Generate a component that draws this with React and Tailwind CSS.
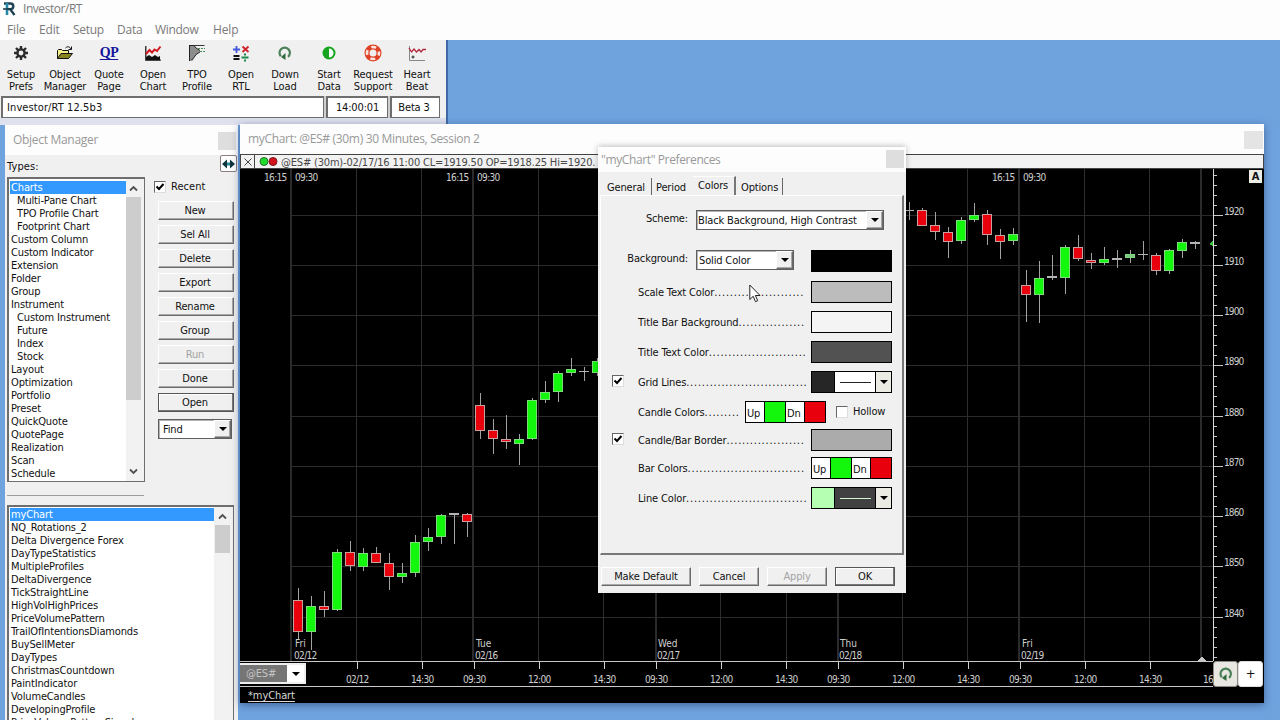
import clsx from 'clsx';

const tools = [
    { id: 'prefs', lines: ['Setup', 'Prefs'] },
    { id: 'folder', lines: ['Object', 'Manager'] },
    { id: 'quote', lines: ['Quote', 'Page'] },
    { id: 'chart', lines: ['Open', 'Chart'] },
    { id: 'tpo', lines: ['TPO', 'Profile'] },
    { id: 'rtl', lines: ['Open', 'RTL'] },
    { id: 'download', lines: ['Down', 'Load'] },
    { id: 'start', lines: ['Start', 'Data'] },
    { id: 'support', lines: ['Request', 'Support'] },
    { id: 'heart', lines: ['Heart', 'Beat'] },
];

const types = [
    'Charts', '>Multi-Pane Chart', '>TPO Profile Chart', '>Footprint Chart', 'Custom Column',
    'Custom Indicator', 'Extension', 'Folder', 'Group', 'Instrument', '>Custom Instrument',
    '>Future', '>Index', '>Stock', 'Layout', 'Optimization', 'Portfolio', 'Preset',
    'QuickQuote', 'QuotePage', 'Realization', 'Scan', 'Schedule',
];

const objects = [
    'myChart', 'NQ_Rotations_2', 'Delta Divergence Forex', 'DayTypeStatistics', 'MultipleProfiles',
    'DeltaDivergence', 'TickStraightLine', 'HighVolHighPrices', 'PriceVolumePattern',
    'TrailOfIntentionsDiamonds', 'BuySellMeter', 'DayTypes', 'ChristmasCountdown',
    'PaintIndicator', 'VolumeCandles', 'DevelopingProfile', 'PriceVolumePatternSignal',
];

// [x, high, top, bottom, low, kind]
const candles = [
    [298, 588, 600, 632, 639, 'dn'], [311, 596, 606, 632, 650, 'up'], [324, 591, 606, 610, 617, 'dn'],
    [337, 549, 552, 610, 611, 'up'], [350, 541, 552, 566, 571, 'dn'], [363, 548, 553, 567, 571, 'up'],
    [376, 547, 553, 563, 563, 'dn'], [389, 553, 563, 577, 590, 'dn'], [402, 563, 573, 577, 583, 'up'],
    [415, 535, 542, 573, 577, 'up'], [428, 528, 537, 542, 551, 'up'], [441, 514, 515, 537, 544, 'up'],
    [454, 513, 513, 515, 544, 'flat'], [467, 513, 514, 522, 537, 'dn'],
    [480, 393, 405, 431, 439, 'dn'], [493, 419, 430, 439, 454, 'dn'], [506, 415, 439, 442, 449, 'dn'],
    [519, 434, 439, 444, 465, 'up'], [532, 398, 400, 439, 440, 'up'], [545, 381, 392, 400, 403, 'up'],
    [558, 371, 373, 392, 402, 'up'], [571, 358, 369, 373, 376, 'up'], [584, 367, 371, 372, 381, 'flat'],
    [597, 358, 361, 373, 376, 'up'],
    [909, 202, 210, 211, 220, 'flat'], [922, 208, 210, 226, 226, 'dn'], [935, 212, 225, 232, 240, 'dn'],
    [948, 227, 232, 242, 258, 'dn'], [961, 217, 220, 241, 244, 'up'], [974, 203, 215, 220, 222, 'up'],
    [987, 210, 214, 235, 245, 'dn'], [1000, 229, 235, 242, 259, 'dn'], [1013, 228, 234, 241, 245, 'up'],
    [1026, 270, 285, 295, 322, 'dn'], [1039, 261, 278, 295, 323, 'up'], [1052, 255, 276, 278, 280, 'flat'],
    [1065, 245, 247, 278, 294, 'up'], [1078, 235, 247, 259, 261, 'dn'], [1091, 253, 260, 263, 269, 'dn'],
    [1104, 247, 259, 263, 265, 'up'], [1117, 250, 258, 260, 268, 'flat'], [1130, 250, 254, 258, 263, 'dim'],
    [1143, 241, 254, 255, 260, 'flat'], [1156, 253, 255, 271, 275, 'dn'], [1169, 249, 250, 271, 274, 'up'],
    [1182, 239, 242, 251, 258, 'up'], [1195, 241, 242, 244, 249, 'flat'],
];

const fills = { up: '#12f70c', dn: '#e8000c', dim: '#7fc787', flat: '#b4b4b4' };

const sessionLines = [290, 472, 655, 837, 1018, 1200];
const thinLines = [356, 421, 538, 603, 720, 786, 902, 967, 1084, 1149];
const prices = [1920, 1910, 1900, 1890, 1880, 1870, 1860, 1850, 1840];
const topTimes = [[264, '16:15'], [295, '09:30'], [446, '16:15'], [477, '09:30'], [992, '16:15'], [1023, '09:30']];
const days = [[295, 'Fri', '02/12'], [476, 'Tue', '02/16'], [658, 'Wed', '02/17'], [840, 'Thu', '02/18'], [1022, 'Fri', '02/19']];
const times = [
    [357, '02/12'], [422, '14:30'], [474, '09:30'], [539, '12:00'], [604, '14:30'], [656, '09:30'], [721, '12:00'],
    [786, '14:30'], [838, '09:30'], [903, '12:00'], [968, '14:30'], [1020, '09:30'], [1085, '12:00'], [1150, '14:30'],
];

const raised = 'border border-t-white border-l-white border-r-[#6b6b6b] border-b-[#6b6b6b] shadow-[inset_-1px_-1px_0_#a8a8a8]';
const sunken = 'border-t-2 border-l-2 border-r border-b border-[#6e6e6e]';
const field = 'border border-[#5f5f5f] shadow-[inset_1px_1px_0_#b4b4b4]';

function ToolIcon({ id }) {
    if (id === 'quote') {
        return <span className="mt-[2px] font-['Liberation_Serif',serif] text-[14px] leading-[16px] font-bold tracking-[-0.5px] text-[#16149c] underline underline-offset-2">QP</span>;
    }
    return (
        <svg width="20" height="20" viewBox="0 0 20 20" fill="none">
            {id === 'prefs' && (
                <>
                    <g stroke="#2b2b2b" strokeWidth="2.4">
                        <path d="M10 3v14M3 10h14M5 5l10 10M15 5L5 15" />
                    </g>
                    <circle cx="10" cy="10" r="4.8" fill="#2b2b2b" />
                    <circle cx="10" cy="10" r="2.4" fill="#f0f0f0" />
                </>
            )}
            {id === 'folder' && (
                <>
                    <path d="M2.500 15.500V7.500l1-1h3l1 1h6v3" fill="#f7f08a" stroke="#111" />
                    <path d="M2.500 15.500l3.500-5h11.500l-4 5z" fill="#8a8420" stroke="#111" />
                    <path d="M10.500 5c2-2 4-1.500 5.500 1M16.500 3.500v3h-3" stroke="#111" />
                </>
            )}
            {id === 'chart' && (
                <>
                    <path d="M3 17V14l3-2 3 2 3-2 3 2 2-1v4z" fill="#111" />
                    <path d="M2.800 3v14.200h15" stroke="#111" strokeWidth="1.200" />
                    <path d="M3 11l3.500-4L9 9.500l2.500-3L14 8l3.500-4.500" stroke="#d11a22" strokeWidth="2" />
                </>
            )}
            {id === 'tpo' && (
                <>
                    <path d="M3 2.500h4l2 3 4 2v1l-4 3-2 3-1 3H3z" fill="#8d8d8d" />
                    <path d="M2.500 2v16M3 2.500h4l2 2.500 4 2.500M13 9l-4 2.500-2 3-3 3" stroke="#222" />
                    <path d="M7 2.500h10.500" stroke="#333" />
                    <path d="M11 5.500h7M13 8.500h5" stroke="#4b8b57" strokeDasharray="2 1" />
                </>
            )}
            {id === 'rtl' && (
                <>
                    <path d="M2 6.500h7M5.500 3v7" stroke="#4256d8" strokeWidth="1.800" />
                    <path d="M11.500 3.500l6 5.500M17.500 3.500l-6 5.500" stroke="#d0212c" strokeWidth="1.800" />
                    <path d="M2.500 13h6M2.500 16h6" stroke="#111" strokeWidth="1.800" />
                    <path d="M10.500 14.500h7M13 11.500h2M13 17.500h2" stroke="#1a8a4a" strokeWidth="1.800" />
                </>
            )}
            {id === 'download' && <ReloadMark />}
            {id === 'start' && (
                <>
                    <circle cx="10" cy="10" r="5.500" stroke="#17a51f" strokeWidth="2" fill="#f5fff5" />
                    <path d="M10 4a6 6 0 0 0 0 12z" fill="#17a51f" />
                </>
            )}
            {id === 'support' && (
                <>
                    <circle cx="10" cy="10" r="6" stroke="#df4126" strokeWidth="5" />
                    <circle cx="10" cy="10" r="6" stroke="#fbe6df" strokeWidth="2.600" strokeDasharray="5 4.425" strokeDashoffset="2.500" />
                </>
            )}
            {id === 'heart' && (
                <>
                    <path d="M2.500 3v14.500H18" stroke="#888" />
                    <path d="M2 5l2.500 4L7 6l2.500 3L12 6.500l2 2.500 2-2.500h3" stroke="#b3283c" strokeWidth="1.300" />
                    <path d="M4.500 14h3M6 12.500v3" stroke="#222" />
                </>
            )}
        </svg>
    );
}

function ReloadMark() {
    return (
        <>
            <path d="M5.800 13.200A5.200 5.200 0 1 1 13 13.800" stroke="#4b8158" strokeWidth="2.200" fill="none" />
            <path d="M10.500 10v7L6 14z" fill="#2f6b3d" />
        </>
    );
}

function Chevron({ up }) {
    return (
        <svg width="9" height="7" viewBox="0 0 9 7" fill="none" className="mx-auto">
            <path d={up ? 'M1 5.500l3.500-3.500L8 5.500' : 'M1 1.500L4.500 5 8 1.500'} stroke="#505050" strokeWidth="1.800" />
        </svg>
    );
}

function DropArrow({ className }) {
    return (
        <span className={clsx('flex items-center justify-center', className)}>
            <svg width="8" height="4" viewBox="0 0 8 4"><path d="M0 0h8L4 4z" fill="#000" /></svg>
        </span>
    );
}

function CheckBox({ checked, className }) {
    return (
        <span className={clsx('block h-[12px] w-[12px] shrink-0 border border-t-[#666] border-l-[#666] border-r-[#ddd] border-b-[#ddd] bg-white', className)}>
            {checked && (
                <svg width="10" height="10" viewBox="0 0 10 10" fill="none">
                    <path d="M1.500 4.500L4 7l4.500-5" stroke="#000" strokeWidth="2" />
                </svg>
            )}
        </span>
    );
}

function PushButton({ label, primary, disabled, className }) {
    return (
        <button
            className={clsx(
                'flex items-center justify-center bg-[#f0f0f0]',
                primary ? 'border border-[#555] shadow-[inset_-1px_-1px_0_#777,inset_1px_1px_0_#fff]' : raised,
                disabled ? 'text-[#a3a3a3]' : 'text-[#111]',
                className
            )}
        >
            {label}
        </button>
    );
}

function ListRows({ items, className }) {
    return (
        <ul className={clsx('min-w-0 flex-1 overflow-hidden bg-white', className)}>
            {items.map((item, i) => (
                <li
                    key={item}
                    className={clsx(
                        'h-[13px] whitespace-nowrap leading-[13px]',
                        item[0] === '>' ? 'pl-[7px]' : 'pl-px',
                        i === 0 && 'bg-[#3399ff] text-white'
                    )}
                >
                    {item.replace('>', '')}
                </li>
            ))}
        </ul>
    );
}

function MainWindow() {
    return (
        <div className="absolute inset-x-0 top-0">
            <div className="h-[40px] bg-[#fdfdfd] font-['Open_Sans',sans-serif] text-[12px] text-[#7a7a7a]">
                <div className="flex h-[18px] items-center pl-[3px]">
                    <svg width="13" height="15" viewBox="0 0 13 15" fill="none" className="-mt-px">
                        <path d="M1 2.500h6.500a2.800 2.800 0 0 1 0 5.600H3M7 8l4.500 6" stroke="#1d4355" strokeWidth="2.400" />
                        <path d="M4 2v12" stroke="#2489a8" strokeWidth="2.600" />
                        <path d="M0 8h8" stroke="#173442" strokeWidth="1.500" />
                    </svg>
                    <span className="ml-[7px] tracking-[-0.45px]">Investor/RT</span>
                </div>
                <div className="flex h-[22px] items-center gap-[14px] pl-[7px] pt-px">
                    <span className="w-[18px]">File</span>
                    <span className="w-[20px]">Edit</span>
                    <span className="w-[30px] tracking-[-0.3px]">Setup</span>
                    <span className="w-[24px] tracking-[-0.2px]">Data</span>
                    <span className="w-[44px] tracking-[-0.3px]">Window</span>
                    <span>Help</span>
                </div>
            </div>
            <div className="h-[85px] w-[448px] border-r-2 border-[#3f6aa5] bg-[#f0f0f0] pt-[3px]">
                <div className="-ml-px flex">
                    {tools.map(tool => (
                        <div key={tool.id} className="flex h-[52px] w-[44px] flex-col items-center leading-[12px]">
                            <div className="flex h-[24px] items-start">
                                <ToolIcon id={tool.id} />
                            </div>
                            <div className="mt-[2px] flex flex-col items-center whitespace-nowrap tracking-[-0.1px]">
                                <span>{tool.lines[0]}</span>
                                <span>{tool.lines[1]}</span>
                            </div>
                        </div>
                    ))}
                </div>
                <div className="ml-[1px] mt-px flex h-[22px] w-[439px] gap-[2px] bg-[#cfcfcf] leading-[20px]">
                    <div className={clsx('flex-1 bg-white pl-[4px] tracking-[0.1px]', sunken)}>Investor/RT 12.5b3</div>
                    <div className={clsx('w-[62px] bg-white text-center', sunken)}>14:00:01</div>
                    <div className={clsx('w-[50px] bg-white pr-[3px] text-center', sunken)}>Beta 3</div>
                </div>
                <div className="h-[7px] bg-[#dfe2ee]" />
            </div>
        </div>
    );
}

function ObjectManager() {
    return (
        <div className="absolute left-[5px] top-[125px] flex h-[600px] w-[233px] flex-col bg-[#f0f0f0]">
            <div className="flex h-[30px] shrink-0 justify-between bg-[#fdfdfd] pl-[8px] pr-[2px] font-['Open_Sans',sans-serif] text-[12px] text-[#999]">
                <span className="leading-[30px] tracking-[-0.3px]">Object Manager</span>
                <span className="mt-[7px] h-[18px] w-[18px] bg-[#dedede]" />
            </div>
            <div className="flex h-[17px] shrink-0 justify-between pl-[2px] pr-px">
                <span className="leading-[24px] tracking-[0.1px]">Types:</span>
                <span className="flex h-[17px] w-[17px] items-center justify-center rounded-[2px] border border-[#8d7e7e] bg-white">
                    <svg width="13" height="10" viewBox="0 0 13 10">
                        <path d="M0 5l5-4.500v9zM13 5L8 .5v9z" fill="#10343d" />
                        <path d="M5 3.500h3v3H5z" fill="#2f8a99" />
                    </svg>
                </span>
            </div>
            <div className="mt-[5px] flex shrink-0">
                <div className={clsx('ml-[2px] flex h-[305px] w-[138px] bg-white', sunken)}>
                    <div className="flex w-[117px] overflow-hidden pl-px"><ListRows items={types} className="pt-[2px]" /></div>
                    <div className="flex flex-1 flex-col bg-[#f2f2f2] pr-[3px]">
                        <div className="flex h-[18px] items-center"><Chevron up /></div>
                        <div className="h-[203px] bg-[#cdcdcd]" />
                        <div className="flex flex-1 items-end pb-[6px]"><Chevron /></div>
                    </div>
                </div>
                <div className="ml-[10px] w-[80px]">
                    <div className="mt-[2px] flex items-center">
                        <CheckBox checked className="-ml-px" />
                        <span className="ml-[5px] pt-px leading-[14px] tracking-[0.05px]">Recent</span>
                    </div>
                    <div className="ml-[3px] mt-[7px] flex flex-col gap-[5px]">
                        {['New', 'Sel All', 'Delete', 'Export', 'Rename', 'Group', 'Run', 'Done', 'Open'].map(label => (
                            <PushButton key={label} label={label} primary={label === 'Open'} disabled={label === 'Run'} className="h-[19px] w-[76px] pr-[2px] pt-px" />
                        ))}
                    </div>
                    <div className={clsx('ml-[3px] mt-[7px] flex h-[20px] w-[74px] bg-white', field)}>
                        <span className="flex-1 pl-[4px] leading-[19px]">Find</span>
                        <DropArrow className={clsx('w-[17px] bg-[#f0f0f0]', raised)} />
                    </div>
                </div>
            </div>
            <div className="ml-[2px] mt-[13px] h-px w-[137px] shrink-0 bg-[#9c9c9c]" />
            <div className={clsx('ml-[2px] mt-[9px] flex min-h-0 w-[227px] flex-1 bg-white', sunken)}>
                <div className="flex w-[205px] overflow-hidden pl-px"><ListRows items={objects} className="pt-px" /></div>
                <div className="flex flex-1 flex-col bg-[#f2f2f2] px-px pr-[3px]">
                    <div className="flex h-[18px] items-center"><Chevron up /></div>
                    <div className="h-[28px] bg-[#cdcdcd]" />
                </div>
            </div>
        </div>
    );
}

function PriceChart() {
    return (
        <svg width="1024" height="492" viewBox="240 169 1024 492" className="block bg-black" shapeRendering="crispEdges">
            {prices.map((p, i) => (
                <rect key={p} x="291" y={Math.floor(215 + i * 50.25)} width="922" height="1" fill="#2b2b2b" />
            ))}
            {thinLines.map(x => <rect key={x} x={x} y="169" width="1" height="492" fill="#2e2e2e" />)}
            {sessionLines.map(x => <rect key={x} x={x} y="169" width="2" height="492" fill="#2b2b2b" />)}
            {candles.map(([x, high, top, bottom, low, kind]) => (
                <g key={x}>
                    <rect x={x} y={high} width="1" height={low - high} fill="#a2a2a2" />
                    {kind === 'flat' ? (
                        <rect x={x - 5} y={top} width="10" height={bottom - top} fill="#b4b4b4" />
                    ) : (
                        <>
                            <rect x={x - 5} y={top} width="10" height={bottom - top} fill={kind === 'dn' ? '#c9a0a0' : '#7ddb7b'} />
                            <rect x={x - 4} y={top + 1} width="8" height={bottom - top - 2} fill={fills[kind]} />
                        </>
                    )}
                </g>
            ))}
            <path d="M1209 244l4-4v6z" fill="#38c43a" />
            <path d="M1198 661l4-5 4 5z" fill="#c8c8c8" />
            <rect x="1213" y="169" width="1" height="492" fill="#d8d8d8" />
            {Array.from({ length: 49 }, (_, i) => (
                <rect key={i} x="1214" y={Math.floor(175 + i * 10.05)} width={i % 5 === 4 ? 9 : 3} height="1" fill="#c8c8c8" />
            ))}
            <g fill="#cfcfcf" fontSize="10" letterSpacing="-0.3">
                {prices.map((p, i) => <text key={p} x="1224" y={Math.floor(215 + i * 50.25)} textLength="20">{p}</text>)}
                {topTimes.map(([x, t]) => <text key={x} x={x} y="181" textLength="23">{t}</text>)}
                {days.map(([x, day, date]) => (
                    <g key={x}>
                        <text x={x} y="647" letterSpacing="0">{day}</text>
                        <text x={x - 1} y="659" textLength="23">{date}</text>
                    </g>
                ))}
            </g>
        </svg>
    );
}

function TimeScale() {
    return (
        <svg width="973" height="26" viewBox="240 661 973 26" className="block bg-black" shapeRendering="crispEdges">
            <rect x="240" y="661" width="973" height="1" fill="#c8c8c8" />
            <rect x="240" y="686" width="973" height="1" fill="#c8c8c8" />
            {times.map(([x, t]) => (
                <g key={x} fill="#cfcfcf">
                    <rect x={x} y="662" width="1" height="7" />
                    <text x={x - 11} y="683" fontSize="10" textLength="23">{t}</text>
                </g>
            ))}
            <text x="1203" y="683" fontSize="10" letterSpacing="-0.8" fill="#cfcfcf">16</text>
        </svg>
    );
}

function ChartWindow() {
    return (
        <div className="absolute left-[240px] top-[124px] h-[579px] w-[1024px] bg-black shadow-[0_2px_8px_rgba(30,50,100,0.55)]">
            <div className="flex h-[30px] justify-between bg-[#fdfdfd] pl-[8px] pr-[1px] font-['Open_Sans',sans-serif] text-[12px] text-[#999]">
                <span className="leading-[30px] tracking-[-0.32px]">myChart: @ES# (30m) 30 Minutes, Session 2</span>
                <span className="mt-[7px] h-[18px] w-[19px] bg-[#e4e4e4]" />
            </div>
            <div className="flex h-[15px] items-center border border-[#444] bg-[#f2f2f2] text-[#484848]">
                <span className="flex h-full w-[14px] items-center justify-center border-r border-[#444]">
                    <svg width="8" height="8" viewBox="0 0 8 8"><path d="M.5.5l7 7M7.500.5l-7 7" stroke="#444" /></svg>
                </span>
                <svg width="20" height="11" viewBox="0 0 20 11" className="ml-[4px]">
                    <circle cx="5" cy="5.500" r="4" fill="#1fdc2b" stroke="#286b2c" />
                    <circle cx="14" cy="5.500" r="4" fill="#d3121d" stroke="#7b1a1f" />
                </svg>
                <span className="ml-[2px] whitespace-nowrap pt-[2px] leading-[13px] tracking-[-0.18px]">@ES# (30m)-02/17/16 11:00 CL=1919.50 OP=1918.25 Hi=1920.</span>
            </div>
            <div className="relative">
                <PriceChart />
                <span className="absolute right-[2px] top-[1px] h-[13px] w-[13px] bg-[#eceee4] text-center text-[11px] font-bold leading-[13px]">A</span>
            </div>
            <div className="relative flex">
                <TimeScale />
                <div className="flex h-[26px]">
                    <span className="flex w-[25px] items-center justify-center rounded-[3px] border border-[#8c8c84] bg-[#e8e7e1]">
                        <svg width="20" height="20" viewBox="0 0 20 20"><ReloadMark /></svg>
                    </span>
                    <span className="flex w-[25px] items-center justify-center rounded-[3px] border border-[#ddd] bg-white text-[13px]">+</span>
                </div>
                {/* symbol selector sits over the time scale */}
                <div className="absolute left-0 top-[2px] flex h-[21px] w-[66px] border-2 border-l-0 border-[#eee] bg-[#757575] text-[#c4c4c4]">
                    <span className="flex-1 pl-[6px] leading-[17px]">@ES#</span>
                    <DropArrow className="w-[17px] bg-white" />
                </div>
            </div>
            <div className="pl-[8px] leading-[18px] tracking-[-0.1px] text-[#d8d8d8] underline underline-offset-2">*myChart</div>
        </div>
    );
}

function PrefRow({ label, dots, checked, gap, labelWidth = 'w-[170px]', children }) {
    return (
        <div className={clsx('flex h-[22px] items-center', gap)}>
            <div className="w-[37px] pl-[11px]">{checked && <CheckBox checked className="mb-[3px]" />}</div>
            <div className={clsx('flex whitespace-nowrap pt-[2px]', labelWidth)}>
                <span>{label}</span>
                <span className="tracking-[0.77px]">{'.'.repeat(dots)}</span>
            </div>
            {children}
        </div>
    );
}

function Swatch({ className }) {
    return <span className={clsx('ml-[3px] h-[22px] w-[81px] border border-black', className)} />;
}

function UpDown({ className }) {
    return (
        <span className={clsx('flex h-[22px] w-[81px] border border-black bg-white leading-[23px]', className)}>
            <span className="w-[19px] border-r border-black pl-px">Up</span>
            <span className="w-[20px] bg-[#12f70c]" />
            <span className="w-[20px] border-x border-black pl-px">Dn</span>
            <span className="flex-1 bg-[#e8000c]" />
        </span>
    );
}

function LinePicker({ dark }) {
    return (
        <span className="ml-[3px] flex h-[22px] w-[81px] border border-black">
            <span className={clsx('w-[23px] border-r border-black', dark ? 'bg-[#b5ffb3]' : 'bg-[#262626]')} />
            <span className={clsx('flex flex-1 items-center justify-center', dark ? 'bg-[#414141]' : 'bg-white')}>
                <span className={clsx('h-px w-[31px]', dark ? 'bg-[#d5f5d5]' : 'bg-[#222]')} />
            </span>
            <DropArrow className="w-[16px] border-l border-black bg-[#ebebe3]" />
        </span>
    );
}

function Preferences() {
    return (
        <div className="absolute left-[598px] top-[147px] flex h-[446px] w-[308px] flex-col bg-[#f0f0f0] shadow-[0_-1px_6px_rgba(0,0,0,0.25)]">
            <div className="flex h-[25px] justify-between bg-[#fdfdfd] pl-[3px] pr-[2px] font-['Open_Sans',sans-serif] text-[12px] text-[#999]">
                <span className="leading-[26px] tracking-[-0.38px]">"myChart" Preferences</span>
                <span className="mt-[3px] h-[18px] w-[18px] bg-[#dedede]" />
            </div>
            <div className="mt-[4px] flex h-[19px] items-end pl-[2px]">
                <span className="h-[17px] w-[52px] border-r border-[#666] pl-[7px] leading-[19px]">General</span>
                <span className="h-[17px] w-[41px] pl-[4px] leading-[19px]">Period</span>
                <span className="h-[19px] w-[43px] border-r-2 border-[#777] border-t border-t-white pl-[5px] leading-[18px]">Colors</span>
                <span className="h-[17px] w-[47px] border-r border-[#666] pl-[5px] leading-[19px]">Options</span>
            </div>
            <div className="ml-[2px] h-[360px] w-[304px] border-2 border-t border-l border-t-white border-l-white border-r-[#777] border-b-[#777]">
                <div className="mt-[14px] flex h-[20px]">
                    <span className="w-[95px] pr-[8px] text-right leading-[17px]">Scheme:</span>
                    <div className={clsx('flex h-[20px] w-[188px] bg-white', field)}>
                        <span className="flex-1 whitespace-nowrap pl-px leading-[19px]">Black Background, High Contrast</span>
                        <DropArrow className={clsx('w-[17px] bg-[#f0f0f0]', raised)} />
                    </div>
                </div>
                <div className="mt-[20px] flex h-[22px]">
                    <span className="w-[95px] pr-[8px] text-right leading-[17px]">Background:</span>
                    <div className={clsx('flex h-[20px] w-[98px] bg-white', field)}>
                        <span className="flex-1 whitespace-nowrap pl-[2px] leading-[19px]">Solid Color</span>
                        <DropArrow className={clsx('w-[17px] bg-[#f0f0f0]', raised)} />
                    </div>
                    <span className="ml-[17px] h-[22px] w-[81px] bg-black" />
                </div>
                <PrefRow label="Scale Text Color" dots={23} gap="mt-[9px]"><Swatch className="bg-[#bcbcbc]" /></PrefRow>
                <PrefRow label="Title Bar Background" dots={17} gap="mt-[8px]"><Swatch className="bg-[#f4f4f4]" /></PrefRow>
                <PrefRow label="Title Text Color" dots={25} gap="mt-[8px]"><Swatch className="bg-[#525252]" /></PrefRow>
                <PrefRow label="Grid Lines" dots={31} checked gap="mt-[8px]"><LinePicker /></PrefRow>
                <PrefRow label="Candle Colors" dots={9} gap="mt-[8px]" labelWidth="w-[103px]">
                    <UpDown className="ml-[4px]" />
                    <CheckBox className="ml-[10px]" />
                    <span className="ml-[5px] pt-px">Hollow</span>
                </PrefRow>
                <PrefRow label="Candle/Bar Border" dots={20} checked gap="mt-[6px]"><Swatch className="bg-[#ababab]" /></PrefRow>
                <PrefRow label="Bar Colors" dots={30} gap="mt-[6px]"><UpDown className="ml-[3px]" /></PrefRow>
                <PrefRow label="Line Color" dots={31} gap="mt-[8px]"><LinePicker dark /></PrefRow>
            </div>
            <div className="mt-[12px] flex gap-[8px] pl-[3px]">
                <PushButton label="Make Default" className="h-[19px] w-[90px] pt-[2px]" />
                <PushButton label="Cancel" className="h-[19px] w-[60px] pt-[2px]" />
                <PushButton label="Apply" disabled className="h-[19px] w-[60px] pt-[2px]" />
                <PushButton label="OK" primary className="h-[19px] w-[60px] pt-[2px]" />
            </div>
            {/* mouse pointer */}
            <svg width="12" height="19" viewBox="0 0 12 19" className="absolute left-[151px] top-[137px]">
                <path d="M.8 1v14.500l3.400-3.200 2.300 5.400 2.200-1-2.300-5.200H11z" fill="#fff" stroke="#222" />
            </svg>
        </div>
    );
}

export default function App() {
    return (
        <div className="relative h-[720px] w-[1280px] overflow-hidden bg-[#6fa3de] font-['DejaVu_Sans_Condensed','DejaVu_Sans',sans-serif] text-[11px] tracking-[-0.15px] text-[#111]">
            <MainWindow />
            <ObjectManager />
            <ChartWindow />
            <Preferences />
        </div>
    );
}
